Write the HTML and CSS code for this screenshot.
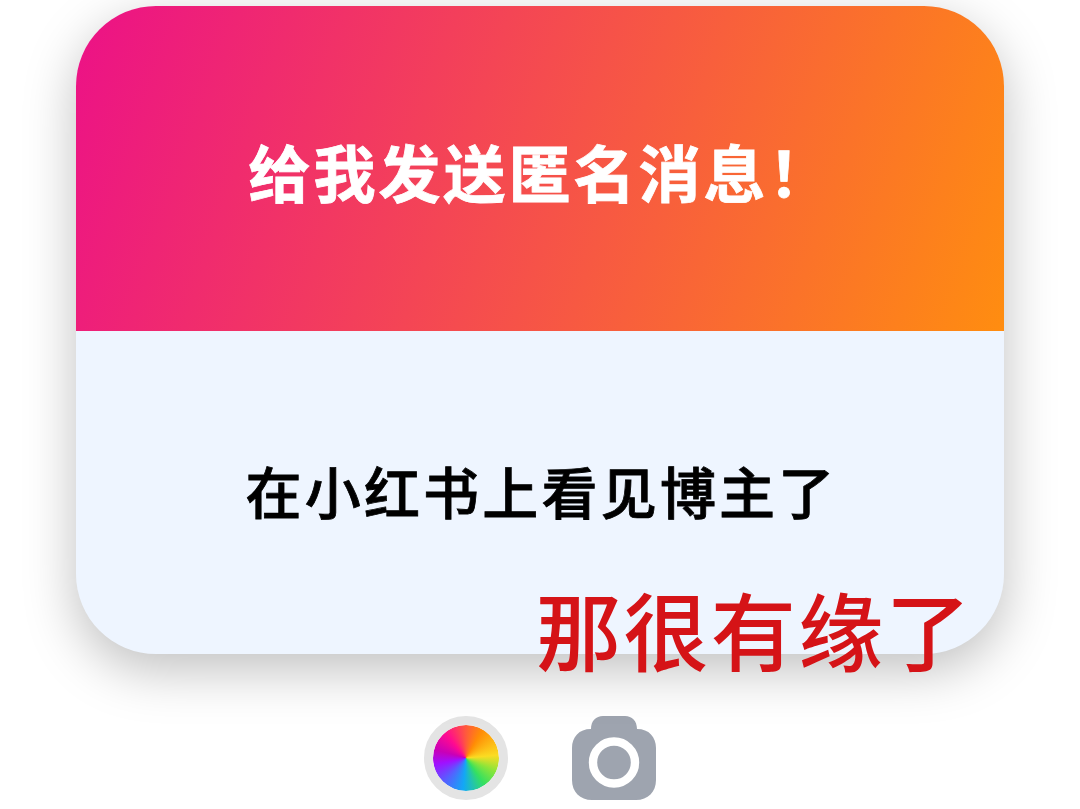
FILE: index.html
```html
<!DOCTYPE html>
<html lang="zh-CN">
<head>
    <meta charset="UTF-8">
    <meta name="viewport" content="width=device-width, initial-scale=1.0">
    <link rel="stylesheet" href="styles.css">
    <title>给我发送匿名消息！</title>
</head>
<body>
    <div class="card">
        <div class="card-header">
            <h1>给我发送匿名消息！</h1>
        </div>
        <div class="card-body">
            <p class="message">在小红书上看见博主了</p>
        </div>
        <p class="reply">那很有缘了</p>
    </div>

    <div class="tools">
        <button class="color-button" aria-label="颜色"></button>
        <button class="camera-button" aria-label="相机">
            <svg width="84" height="84" viewBox="0 0 84 84">
                <path fill="#9ea4af" d="M31 0H53C60 0 65 5 65 13C77 13 84 21 84 32V64C84 76 76 84 64 84H20C8 84 0 76 0 64V32C0 21 7 13 19 13C19 5 24 0 31 0Z"/>
                <circle cx="42" cy="46.5" r="21" fill="none" stroke="#fff" stroke-width="8.4"/>
            </svg>
        </button>
    </div>
</body>
</html>
```

FILE: styles.css
```css
body {
    font-family: "Noto Sans CJK SC", sans-serif;
    margin: 0;
    height: 809px;
    overflow: hidden;
    background-color: #fff;
    display: flex;
    flex-direction: column;
    align-items: center;
}

.card {
    position: relative;
    width: 928px;
    height: 648px;
    margin-top: 6px;
    border-radius: 80px;
    background-color: #eef5ff;
    box-shadow: 0 16px 52px rgba(0, 0, 0, 0.25);
}

.card-header {
    height: 325px;
    border-radius: 80px 80px 0 0;
    background: linear-gradient(109deg, #ec1187 0%, #ff8d10 100%);
    display: flex;
    align-items: center;
    justify-content: center;
}

h1 {
    margin: 4px 0 0 2px;
    color: #fff;
    font-size: 62px;
    font-weight: 700;
    line-height: 1;
    letter-spacing: 3px;
    white-space: nowrap;
    -webkit-text-stroke: 0.8px #fff;
}

.card-body {
    height: 317px;
    display: flex;
    align-items: center;
    justify-content: center;
}

.message {
    margin: 0 0 0 3px;
    color: #000;
    font-size: 56px;
    font-weight: 500;
    line-height: 1;
    letter-spacing: 3.2px;
    white-space: nowrap;
    -webkit-text-stroke: 0.8px #000;
}

/* overlaps the bottom edge of the card */
.reply {
    position: absolute;
    left: 460px;
    top: 579px;
    margin: 0;
    color: #d51317;
    font-size: 85px;
    font-weight: 500;
    line-height: 1;
    letter-spacing: 2.4px;
    white-space: nowrap;
}

.tools {
    display: flex;
    gap: 64px;
    margin-top: 62px;
}

button {
    width: 84px;
    height: 84px;
    padding: 0;
    border: none;
    background: none;
    cursor: pointer;
}

.color-button {
    border: 9px solid #e4e4e4;
    border-radius: 50%;
    background: conic-gradient(#ff5a3c, #ff8c05 30deg, #fbdc22 85deg, #8ae53a 115deg, #35e060 145deg, #12a8f5 185deg, #5560ff 222deg, #a010ff 258deg, #c800b8 285deg, #ff0a90 320deg, #ff5a3c) padding-box;
}

.camera-button svg {
    display: block;
}
```
